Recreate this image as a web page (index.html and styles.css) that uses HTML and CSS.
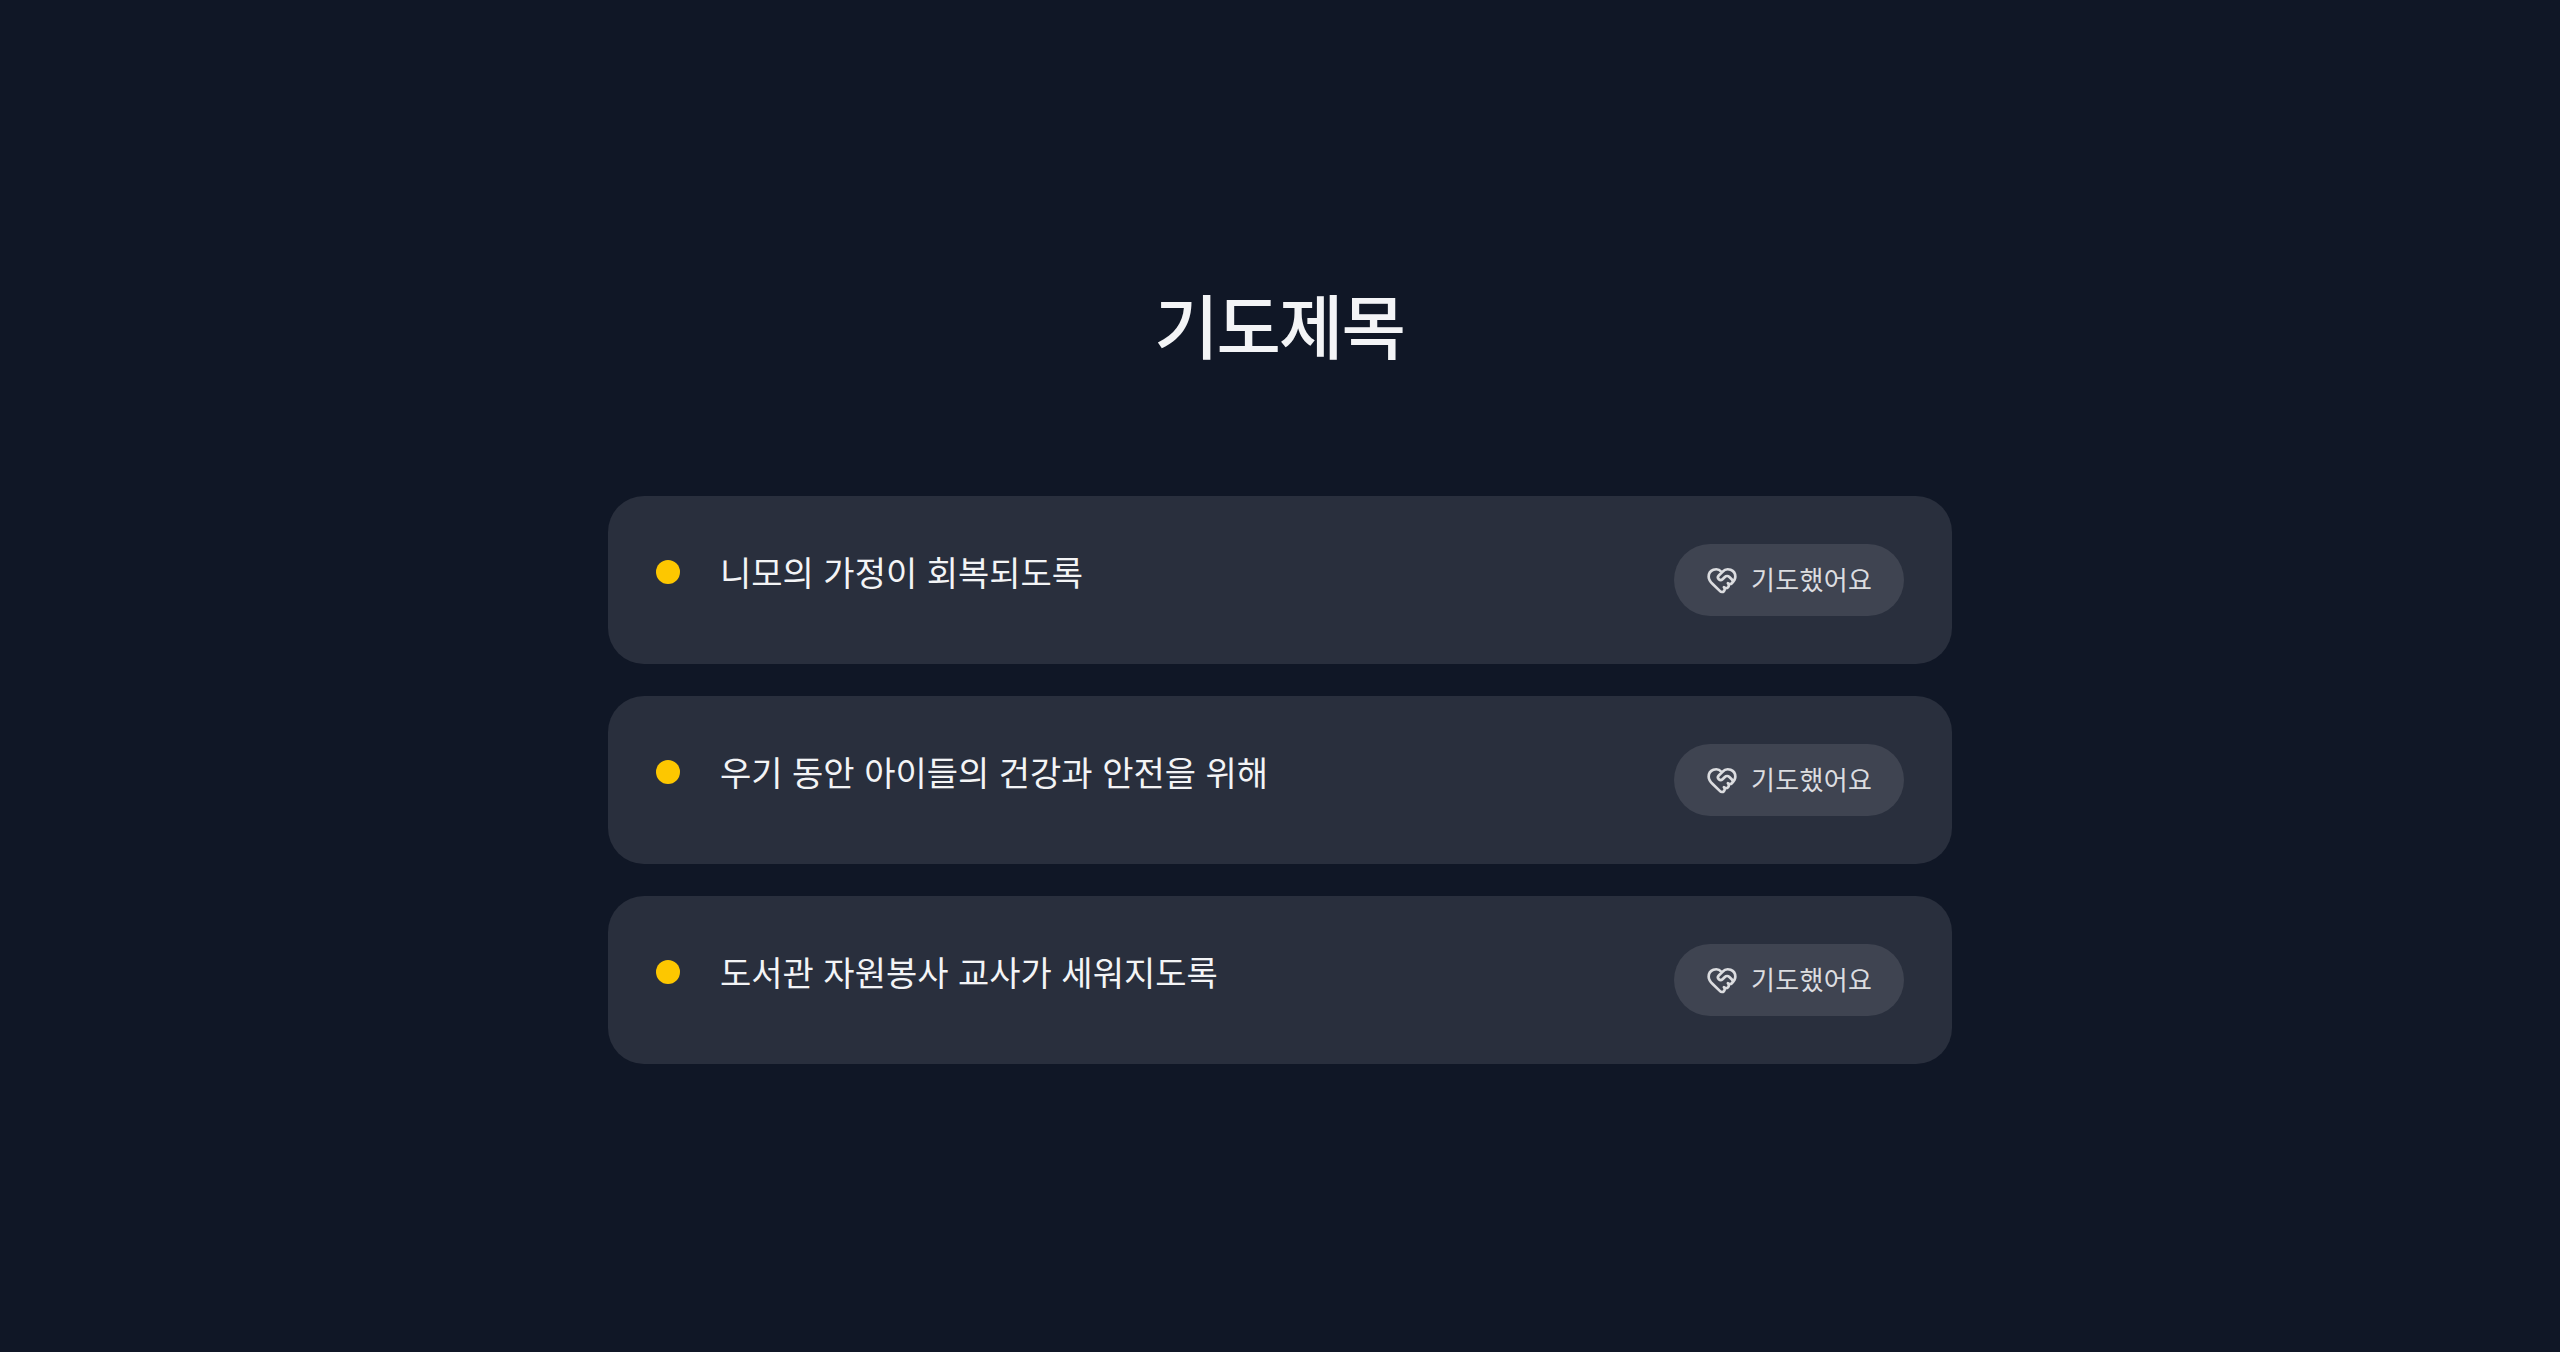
FILE: index.html
```html
<!DOCTYPE html>
<html lang="ko">
<head>
<meta charset="utf-8">
<title>기도제목</title>
<link rel="stylesheet" href="styles.css">
</head>
<body>
<svg width="0" height="0" class="defs" aria-hidden="true">
<symbol id="heart-handshake" viewBox="0 0 24 24">
<path d="M19.414 14.414C21 12.828 22 11.5 22 9.5a5.5 5.5 0 0 0-9.591-3.676.6.6 0 0 1-.818.001A5.5 5.5 0 0 0 2 9.5c0 2.3 1.5 4 3 5.5l5.535 5.362a2 2 0 0 0 2.879.052 2.12 2.12 0 0 0-.004-3 2.124 2.124 0 1 0 3-3 2.124 2.124 0 0 0 3.004 0 2 2 0 0 0 0-2.828l-1.881-1.882a2.41 2.41 0 0 0-3.409 0l-1.71 1.71a2 2 0 0 1-2.828 0 2 2 0 0 1 0-2.828l2.823-2.762"/>
</symbol>
</svg>
<main class="prayers">
<h1 class="title">기도제목</h1>
<ul class="list">
<li class="card"><span class="dot"></span><p class="topic">니모의 가정이 회복되도록</p><button class="pray"><svg class="icon"><use href="#heart-handshake"/></svg><span>기도했어요</span></button></li>
<li class="card"><span class="dot"></span><p class="topic">우기 동안 아이들의 건강과 안전을 위해</p><button class="pray"><svg class="icon"><use href="#heart-handshake"/></svg><span>기도했어요</span></button></li>
<li class="card"><span class="dot"></span><p class="topic">도서관 자원봉사 교사가 세워지도록</p><button class="pray"><svg class="icon"><use href="#heart-handshake"/></svg><span>기도했어요</span></button></li>
</ul>
</main>
</body>
</html>
```
FILE: styles.css
```css
* { box-sizing: border-box; margin: 0; padding: 0; }
body { min-height: 1352px; background: #101726; color: #f3f4f6; font-family: "Noto Sans CJK KR", sans-serif; }
.defs { display: block; height: 0; }
.prayers { width: 1344px; margin: 0 auto; padding-top: 288px; }
.title { height: 80px; padding-right: 2px; line-height: 72px; font-size: 70px; font-weight: 500; letter-spacing: -2px; text-align: center; }
.list { display: flex; flex-direction: column; gap: 32px; margin-top: 128px; list-style: none; }
.card { display: flex; align-items: flex-start; height: 168px; padding: 48px; border-radius: 36px; background: #292f3d; }
.dot { flex: none; width: 24px; height: 24px; margin: 16px 40px 0 0; border-radius: 50%; background: #fdc700; }
.topic { flex: 1; font-size: 34px; line-height: 56px; font-weight: 400; }
.pray { display: flex; align-items: center; gap: 13px; width: 230px; height: 72px; padding: 0 0 0 32px; border: 0; border-radius: 36px; background: #3f4451; color: #dcdde0; font-family: inherit; font-size: 26px; line-height: 40px; font-weight: 400; letter-spacing: 0.3px; }
.pray span { margin-top: -2px; }
.icon { width: 32px; height: 32px; fill: none; stroke: currentColor; stroke-width: 2; stroke-linecap: round; stroke-linejoin: round; }
```
